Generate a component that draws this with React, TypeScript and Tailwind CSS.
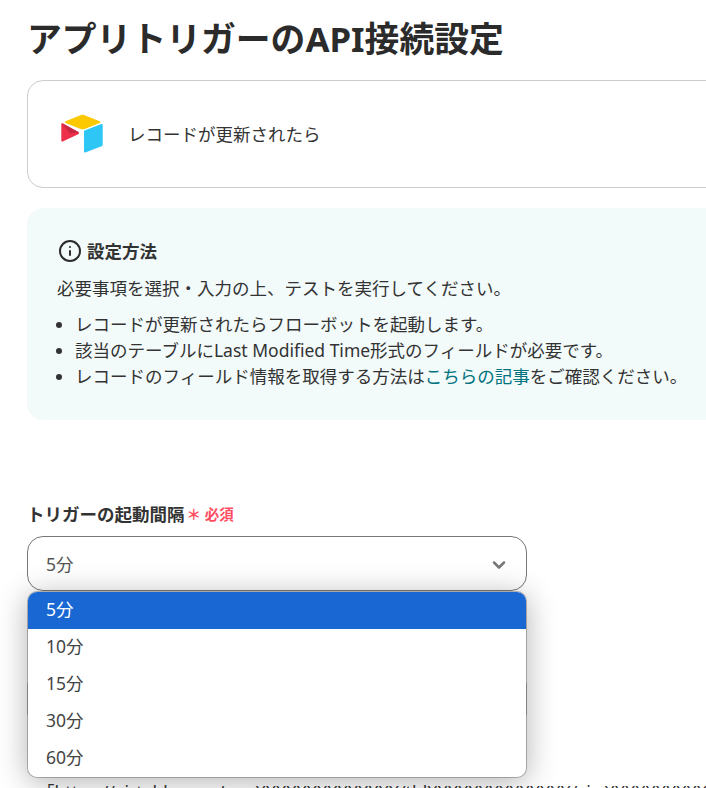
import { ChevronDown, Info } from 'lucide-react'

const FONT = 'font-["Noto_Sans","Noto_Sans_CJK_JP",sans-serif]'

const options = ['5分', '10分', '15分', '30分', '60分']

const AirtableLogo = () => (
  <svg width="46" height="40" viewBox="0 0 46 40" className="shrink-0">
    <path d="M20.5 1.2 5.6 7.2c-.8.3-.8 1.4 0 1.800l15 5.900c1.300.5 2.800.5 4.100 0l15-5.900c.8-.4.8-1.500 0-1.800L24.600 1.200c-1.300-.5-2.800-.5-4.100 0z" fill="#fcc800" />
    <path d="M24 17.500v20c0 .7.700 1.200 1.400.9l16.700-6.500c.4-.1.600-.5.600-.9V11c0-.7-.7-1.200-1.400-.9l-16.700 6.500c-.4.100-.6.500-.6.900z" fill="#2dc6f5" />
    <path d="M1.300 9.700v17.100c0 .7.800 1.200 1.400.8l16-7.700c.5-.3.500-1 0-1.300L2.600 9.300c-.6-.3-1.300 0-1.300.4z" fill="#ed3049" />
    <path d="M2 9.300l8 10.200 9-.9c0-.2-.100-.4-.300-.5z" fill="#c62842" />
  </svg>
)

export default function App() {
  return (
    <div className={`relative h-[788px] w-[706px] overflow-hidden bg-white text-[17.5px] text-[#333] ${FONT}`}>
      <div className="w-[800px] pl-[27px]">
        <h1 className="pt-[13px] text-[34.8px] leading-[52px] font-bold text-[#2b2b2b]">アプリトリガーのAPI接続設定</h1>

        <div className="mt-[15px] flex h-[108px] items-center gap-[22px] rounded-2xl border border-[#ccc] pl-[32px]">
          <AirtableLogo />
          <span>レコードが更新されたら</span>
        </div>

        <div className="mt-5 h-[212px] rounded-2xl bg-[#f2fafa] pt-[30px] pl-[30px] leading-[26.25px]">
          <div className="flex items-center gap-[5px] font-bold">
            <Info size={24} strokeWidth={2} className="ml-[1px] text-[#2b2b2b]" />
            <span>設定方法</span>
          </div>
          <p className="mt-[11px]">必要事項を選択・入力の上、テストを実行してください。</p>
          <ul className="mt-[9px] w-[660px] list-disc pl-[18px]">
            <li>レコードが更新されたらフローボットを起動します。</li>
            <li>該当のテーブルにLast Modified Time形式のフィールドが必要です。</li>
            <li>
              レコードのフィールド情報を取得する方法は<span className="text-[#00737e]">こちらの記事</span>をご確認ください。
            </li>
          </ul>
        </div>

        <div className="mt-[82px] flex items-center gap-[2px] leading-6">
          <span className="font-bold">トリガーの起動間隔</span>
          <span className="text-[14.5px] font-bold text-[#ff4d61]">＊ 必須</span>
        </div>

        <div className="mt-[10px] flex h-[55px] w-[500px] items-center justify-between rounded-2xl border border-[#777] pt-[2px] pr-[17px] pl-[18px] text-[#555]">
          <span>5分</span>
          <ChevronDown size={20} strokeWidth={3} className="text-[#777]" />
        </div>

        {/* next field, hidden under the open menu except for its side borders */}
        <div className="mt-[88px] h-[40px] w-[500px] rounded-md border border-[#ccc]" />
        <p className="mt-[60px] pl-[10px] whitespace-nowrap">「https://airtable.com/appXXXXXXXXXXXXXX/tblXXXXXXXXXXXXXX/viwXXXXXXXXXXXXXX」</p>
      </div>

      {/* open select menu, sits over the fields below */}
      <div className="absolute top-[591px] left-[27px] w-[500px] overflow-hidden rounded-[10px] border border-black/25 bg-white bg-clip-padding text-[#444] shadow-[0_4px_30px_rgba(0,0,0,0.3)]">
        {options.map((option, i) => (
          <div
            key={option}
            className={`flex h-[37px] items-center px-[18px] pb-[2px] ${i === 0 ? 'bg-[#1967d2] text-white' : ''}`}
          >
            {option}
          </div>
        ))}
      </div>
    </div>
  )
}
